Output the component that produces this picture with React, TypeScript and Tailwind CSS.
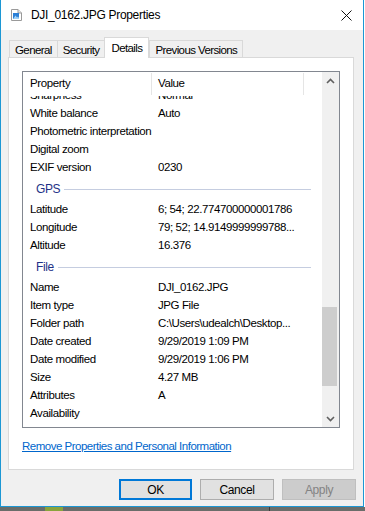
import React from "react";

type Row = { k: string; v?: string; group?: boolean };

const rows: Row[] = [
  { k: "Sharpness", v: "Normal" },
  { k: "White balance", v: "Auto" },
  { k: "Photometric interpretation" },
  { k: "Digital zoom" },
  { k: "EXIF version", v: "0230" },
  { k: "GPS", group: true },
  { k: "Latitude", v: "6; 54; 22.774700000001786" },
  { k: "Longitude", v: "79; 52; 14.9149999999788..." },
  { k: "Altitude", v: "16.376" },
  { k: "File", group: true },
  { k: "Name", v: "DJI_0162.JPG" },
  { k: "Item type", v: "JPG File" },
  { k: "Folder path", v: "C:\\Users\\udealch\\Desktop..." },
  { k: "Date created", v: "9/29/2019 1:09 PM" },
  { k: "Date modified", v: "9/29/2019 1:06 PM" },
  { k: "Size", v: "4.27 MB" },
  { k: "Attributes", v: "A" },
  { k: "Availability" },
];

const tabs = ["General", "Security", "Details", "Previous Versions"];

function FileIcon() {
  return (
    <svg width="11" height="12" viewBox="0 0 11 12">
      <path d="M0.5 0.5 H7 L10.5 4 V11.5 H0.5 Z" fill="#fff" stroke="#9a9a9a" />
      <path d="M7 0.5 V4 H10.5" fill="#e8e8e8" stroke="#9a9a9a" />
      <rect x="2" y="4" width="6" height="6" fill="#2b7fd6" />
      <path d="M2 10 L4.5 6.5 L6 8.5 L7 7.5 L8 9 V10 Z" fill="#9fd0f5" />
    </svg>
  );
}

function Chevron({ up }: { up?: boolean }) {
  return (
    <svg width="9" height="6" viewBox="0 0 9 6">
      <path d={up ? "M1 5 L4.5 1.5 L8 5" : "M1 1 L4.5 4.5 L8 1"} fill="none" stroke="#606060" strokeWidth="1.6" />
    </svg>
  );
}

export default function App() {
  return (
    <div className="w-[365px] h-[511px] bg-white overflow-hidden flex flex-col text-black font-['Liberation_Sans',Arial,sans-serif] text-[11.5px] tracking-[-0.4px]">
      <div className="w-[364px] h-[507px] border-x border-b border-[#1c97d4] bg-[#f0f0f0] flex flex-col">
        {/* title bar */}
        <div className="h-[30px] bg-white flex items-center shrink-0">
          <div className="ml-[10px] mt-[-1px]">
            <FileIcon />
          </div>
          <span className="ml-[9px] text-[12px] tracking-[-0.3px]">DJI_0162.JPG Properties</span>
          <svg className="ml-auto mr-[11px]" width="11" height="11" viewBox="0 0 11 11">
            <path d="M0.5 0.5 L10.5 10.5 M10.5 0.5 L0.5 10.5" stroke="#111" strokeWidth="1" />
          </svg>
        </div>

        {/* tabs */}
        <div className="flex items-end h-[20px] mt-[7px] pl-[8px] shrink-0 tracking-[-0.6px]">
          {tabs.map((t) =>
            t === "Details" ? (
              <div
                key={t}
                className="h-[21px] -mb-px relative z-10 bg-white border-x border-t border-[#d9d9d9] px-[6px] pt-[2px]"
              >
                {t}
              </div>
            ) : (
              <div
                key={t}
                className="h-[17px] bg-[#f0f0f0] border-t border-l last:border-r border-[#d9d9d9] px-[5px] pt-[1px]"
              >
                {t}
              </div>
            )
          )}
        </div>

        {/* panel */}
        <div className="ml-[7px] w-[346px] h-[413px] bg-white border border-[#d9d9d9] pt-[13px] pl-[13px] flex flex-col shrink-0">
          <div className="w-[318px] h-[357px] border border-[#828790] flex">
            <div className="flex-1 flex flex-col min-w-0">
              <div className="h-[24px] flex shrink-0">
                <div className="w-[129px] border-r border-[#e5e5e5] pl-[7px] flex items-center my-[1px]">Property</div>
                <div className="w-[152px] border-r border-[#e5e5e5] pl-[6px] flex items-center my-[1px]">Value</div>
              </div>
              <div className="flex-1 overflow-hidden">
                <div className="mt-[-9px]">
                  {rows.map((r) =>
                    r.group ? (
                      <div key={r.k} className="h-[24px] flex items-center pl-[13px] pr-[11px]">
                        <span className="text-[#1e3287] text-[12px]">{r.k}</span>
                        <div className="flex-1 h-px bg-[#c5cde0] ml-[4px]" />
                      </div>
                    ) : (
                      <div key={r.k} className="h-[18px] flex items-center whitespace-nowrap">
                        <div className="w-[135px] pl-[7px] shrink-0">{r.k}</div>
                        <div>{r.v}</div>
                      </div>
                    )
                  )}
                </div>
              </div>
            </div>
            {/* scrollbar */}
            <div className="w-[17px] bg-[#f0f0f0] flex flex-col shrink-0">
              <div className="h-[17px] flex items-center justify-center">
                <Chevron up />
              </div>
              <div className="h-[218px]" />
              <div className="h-[79px] bg-[#cdcdcd] mr-[2px]" />
              <div className="flex-1" />
              <div className="h-[17px] flex items-center justify-center">
                <Chevron />
              </div>
            </div>
          </div>
          <a href="#" className="mt-[10px] text-[#0066cc] underline self-start leading-[16px] tracking-[-0.5px]">
            Remove Properties and Personal Information
          </a>
        </div>

        {/* buttons */}
        <div className="flex justify-end gap-[8px] pr-[7px] mt-[9px]">
          <button className="w-[73px] h-[21px] bg-[#e1e1e1] border-2 border-[#0078d7] text-[12px]">OK</button>
          <button className="w-[74px] h-[21px] bg-[#e1e1e1] border border-[#adadad] text-[12px]">Cancel</button>
          <button className="w-[74px] h-[21px] bg-[#cccccc] border border-[#bfbfbf] text-[#838383] text-[12px]">Apply</button>
        </div>
      </div>
      {/* desktop behind */}
      <div className="flex-1 bg-[#6a6d6a] flex">
        <div className="w-[45px]" />
        <div className="w-[18px] bg-[#8aa33c]" />
        <div className="w-[206px]" />
        <div className="w-px bg-[#3c3c3c]" />
      </div>
    </div>
  );
}
